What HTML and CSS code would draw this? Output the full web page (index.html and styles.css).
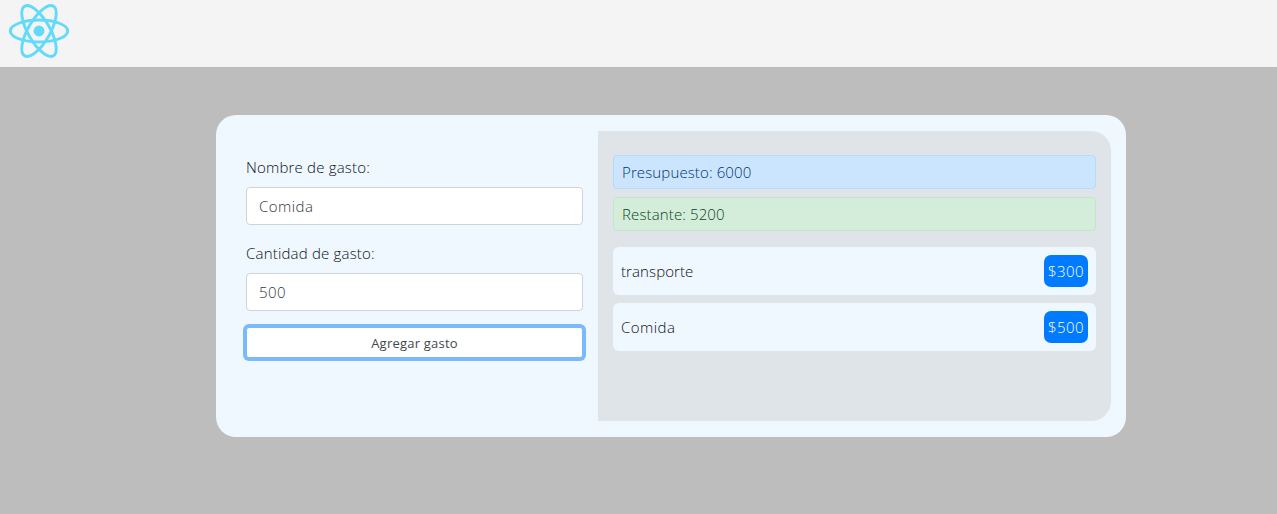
FILE: index.html
```html
<!DOCTYPE html>
<html lang="es">
<head>
<meta charset="utf-8">
<title>Control de gastos</title>
<link rel="stylesheet" href="styles.css">
</head>
<body>
<header class="navbar">
  <svg class="logo" viewBox="-11.5 -10.25 23 20.5" fill="none" stroke="#61dafb" stroke-width="1.1">
    <circle r="2.1" fill="#61dafb" stroke="none"/>
    <ellipse rx="11" ry="4.2"/>
    <ellipse rx="11" ry="4.2" transform="rotate(60)"/>
    <ellipse rx="11" ry="4.2" transform="rotate(120)"/>
  </svg>
</header>
<main class="card">
  <form class="form">
    <label class="label" for="name">Nombre de gasto:</label>
    <input class="input" id="name" type="text" value="Comida">
    <label class="label" for="amount">Cantidad de gasto:</label>
    <input class="input" id="amount" type="text" value="500">
    <button class="button" type="button">Agregar gasto</button>
  </form>
  <section class="panel">
    <div class="alert budget">Presupuesto: 6000</div>
    <div class="alert left">Restante: 5200</div>
    <ul class="list">
      <li class="item"><span class="concept">transporte</span><span class="badge">$300</span></li>
      <li class="item"><span class="name">Comida</span><span class="badge">$500</span></li>
    </ul>
  </section>
</main>
</body>
</html>
```
FILE: styles.css
```css
* { box-sizing: border-box; }
body {
  margin: 0;
  min-height: 514px;
  background: #bdbdbd;
  color: #0c1016;
  font: 300 15px/24px "Open Sans", "Noto Sans", sans-serif;
}
.navbar {
  height: 67px;
  padding: 4px 9px;
  background: #f4f4f4;
}
.logo { display: block; width: 60px; height: 54px; }
.card {
  display: flex;
  width: 910px;
  height: 322px;
  margin: 48px 0 0 216px;
  padding: 16px 15px;
  border-radius: 20px;
  background: #eff7ff;
}
.form {
  display: flex;
  flex-direction: column;
  width: 367px;
  padding: 24px 15px 0;
}
.label { margin-bottom: 8px; letter-spacing: 0.19px; }
.input {
  width: 100%;
  height: 38px;
  margin-bottom: 16px;
  padding: 6px 12px;
  border: 1px solid #ced4da;
  border-radius: 4px;
  background: #fff;
  color: #2f353b;
  font: inherit;
  letter-spacing: 0.45px;
}
.button {
  height: 31px;
  padding: 1px 0 0;
  border: 1px solid #7ab9fb;
  border-radius: 3px;
  background: #fff;
  box-shadow: 0 0 0 3px #7ab9fb;
  color: #43484d;
  font: 400 13px/28px "Open Sans", "Noto Sans", sans-serif;
  letter-spacing: 0.22px;
}
.panel {
  width: 513px;
  padding: 24px 15px;
  border-radius: 0 20px 20px 0;
  background: #dfe4e8;
}
.alert {
  height: 34px;
  margin-bottom: 8px;
  padding: 4px 8px;
  border: 1px solid #b8daff;
  border-radius: 4px;
  background: #cce5ff;
  color: #003470;
  letter-spacing: 0.13px;
}
.alert.left {
  margin-bottom: 16px;
  border-color: #c3e6cb;
  background: #d4edda;
  color: #0c4518;
}
.list { margin: 0; padding: 0; list-style: none; }
.item {
  display: flex;
  align-items: center;
  justify-content: space-between;
  height: 48px;
  margin-bottom: 8px;
  padding: 8px;
  border-radius: 6px;
  background: #eff7ff;
}
.concept { letter-spacing: 0.1px; }
.name { letter-spacing: 0.45px; }
.badge {
  width: 44px;
  height: 32px;
  border-radius: 7px;
  background: #007bff;
  color: #fff;
  line-height: 33px;
  letter-spacing: 0.4px;
  text-align: center;
}
```
